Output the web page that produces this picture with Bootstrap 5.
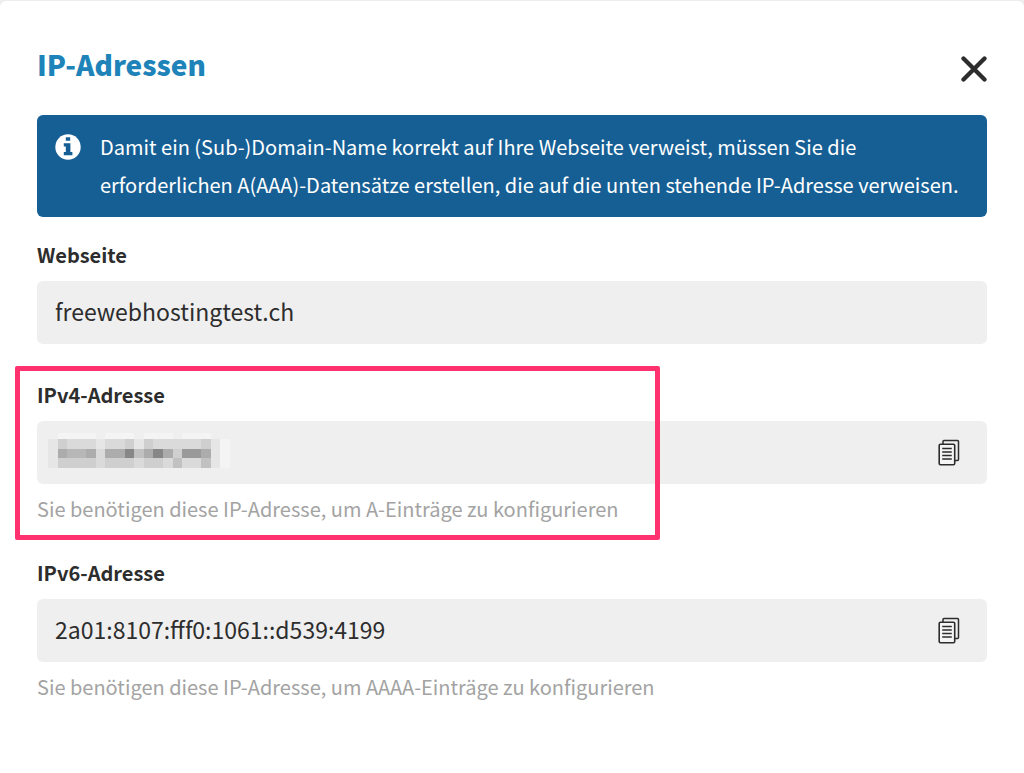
<!DOCTYPE html>
<html lang="de">
<head>
<meta charset="utf-8">
<meta name="viewport" content="width=device-width, initial-scale=1">
<title>IP-Adressen</title>
<link href="https://cdn.jsdelivr.net/npm/bootstrap@5.3.0/dist/css/bootstrap.min.css" rel="stylesheet">
<style>
  body {
    background: #ededed;
    color: #2d2d2d;
    font-family: "Noto Sans CJK SC", "Noto Sans", sans-serif;
    font-size: 20px;
    padding-top: 1px;
  }
  .dialog-panel {
    min-height: calc(100vh - 1px);
    padding: 42px 37px 36px;
    border-radius: 6px 6px 0 0;
  }
  .dialog-title { color: #1d83b9; font-size: 28px; font-weight: 900; line-height: 42px; }
  .close-btn { color: #2d2d2d; line-height: 0; margin-top: 13px; }
  .info-box {
    background: #165f95;
    border-radius: 6px;
    margin-top: 30px;
    padding: 13px 18px;
    gap: 19px;
    line-height: 38px;
  }
  .info-box svg { margin-top: 6px; }
  .field-label { line-height: 28px; margin-bottom: 12px; }
  .field-box { background: #efefef; border-radius: 6px; }
  .field-box .form-control {
    color: #2d2d2d;
    font-size: 23px;
    line-height: 32px;
    height: 63px;
    padding: 14px 18px 17px;
  }
  .copy-btn { color: #2d2d2d; line-height: 0; padding: 0 27px; }
  .hint-text { color: #a3a3a3; line-height: 26px; margin-top: 12px; }
  .masked-value { left: 11px; top: 12px; }
  .marker-frame {
    border: 5px solid #ff326f;
    border-radius: 2px;
    inset: -15px auto -18px -22px;
    width: 645px;
    pointer-events: none;
  }
  .fields { margin-top: 24px; gap: 37px; }
</style>
</head>
<body>
<svg class="d-none" aria-hidden="true">
  <symbol id="copy" viewBox="0 0 22 27">
    <path d="M5 5V2.500Q5 1.500 6 1.500H19.500Q20.500 1.500 20.500 2.500V20.500Q20.500 21.500 19.500 21.500H17" fill="none" stroke="currentColor" stroke-width="1.500"/>
    <rect x="1.200" y="5.200" width="15.500" height="20.500" rx="1.200" fill="#f5f5f5" stroke="currentColor" stroke-width="1.600"/>
    <path d="M4.200 9.500H13.800M4.200 13H13.800M4.200 16.500H13.800M4.200 20H13.800" stroke="currentColor" stroke-width="1.400"/>
  </symbol>
</svg>
<main class="dialog-panel bg-white" role="dialog" aria-labelledby="title">
  <header class="d-flex justify-content-between align-items-start">
    <h1 id="title" class="dialog-title mb-0">IP-Adressen</h1>
    <button type="button" class="close-btn btn border-0 p-0" aria-label="Schliessen">
      <svg width="26" height="26" viewBox="0 0 26 26"><path d="M2.500 2.500L23.500 23.500M23.500 2.500L2.500 23.500" stroke="currentColor" stroke-width="4.300" stroke-linecap="round"/></svg>
    </button>
  </header>

  <div class="info-box d-flex text-white" role="note">
    <svg class="flex-shrink-0" width="26" height="26" viewBox="0 0 26 26" aria-hidden="true">
      <circle cx="13" cy="13" r="12.700" fill="currentColor"/>
      <path d="M10.800 3.200H15.200V6.800H10.800ZM8.800 9.200H15.400V18H17.400V21.300H8.800V18H10.800V12.500H8.800Z" fill="#165f95"/>
    </svg>
    <div>Damit ein (Sub-)Domain-Name korrekt auf Ihre Webseite verweist, müssen Sie die erforderlichen A(AAA)-Datensätze erstellen, die auf die unten stehende IP-Adresse verweisen.</div>
  </div>

  <form class="fields d-flex flex-column">
    <div>
      <label class="field-label d-block fw-bold" for="site">Webseite</label>
      <div class="field-box d-flex">
        <input id="site" class="form-control border-0 bg-transparent" value="freewebhostingtest.ch" readonly>
      </div>
    </div>

    <div class="position-relative">
      <label class="field-label d-block fw-bold" for="ipv4">IPv4-Adresse</label>
      <div class="field-box d-flex align-items-center position-relative">
        <input id="ipv4" class="form-control border-0 bg-transparent" aria-describedby="ipv4-hint" readonly>
        <svg class="masked-value position-absolute" width="182" height="35" viewBox="0 0 19 35" preserveAspectRatio="none" shape-rendering="crispEdges" aria-hidden="true">
          <path fill="#f4f4f4" d="M1 0h4v6h-4zM6 0h3v6h-3zM10 0h3v6h-3zM14 0h3v6h-3zM18 6h1v29h-1z"/>
          <path fill="#e6e6e6" d="M0 6h1v29h-1zM5 6h1v10h-1zM9 6h1v10h-1zM17 6h1v29h-1z"/>
          <path fill="#dadada" d="M2 6h3v10h-3zM6 6h2v10h-2zM11 6h3v10h-3zM14 6h2v10h-2zM5 16h1v19h-1zM9 25h1v10h-1zM12 25h1v10h-1zM14 25h2v10h-2z"/>
          <path fill="#cfcfcf" d="M1 6h1v10h-1zM8 6h1v10h-1zM10 6h1v10h-1zM16 6h1v10h-1zM1 25h4v10h-4zM6 25h3v10h-3zM10 25h2v10h-2zM13 16h1v9h-1z"/>
          <path fill="#c1c1c1" d="M9 16h1v9h-1zM13 25h1v10h-1zM16 25h1v10h-1z"/>
          <path fill="#acacac" d="M1 16h4v9h-4zM6 16h2v9h-2zM10 16h1v9h-1zM12 16h1v9h-1zM16 16h1v9h-1z"/>
          <path fill="#b7b7b7" d="M2 16h2v9h-2z"/>
          <path fill="#9a9a9a" d="M14 16h2v9h-2z"/>
          <path fill="#878787" d="M8 16h1v9h-1zM11 16h1v9h-1z"/>
        </svg>
        <button type="button" class="copy-btn btn border-0" aria-label="IPv4-Adresse kopieren"><svg width="22" height="27"><use href="#copy"/></svg></button>
      </div>
      <div id="ipv4-hint" class="hint-text">Sie benötigen diese IP-Adresse, um A-Einträge zu konfigurieren</div>
      <div class="marker-frame position-absolute"></div>
    </div>

    <div>
      <label class="field-label d-block fw-bold" for="ipv6">IPv6-Adresse</label>
      <div class="field-box d-flex align-items-center">
        <input id="ipv6" class="form-control border-0 bg-transparent" value="2a01:8107:fff0:1061::d539:4199" aria-describedby="ipv6-hint" readonly>
        <button type="button" class="copy-btn btn border-0" aria-label="IPv6-Adresse kopieren"><svg width="22" height="27"><use href="#copy"/></svg></button>
      </div>
      <div id="ipv6-hint" class="hint-text">Sie benötigen diese IP-Adresse, um AAAA-Einträge zu konfigurieren</div>
    </div>
  </form>
</main>
<script src="https://cdn.jsdelivr.net/npm/bootstrap@5.3.0/dist/js/bootstrap.bundle.min.js"></script>
</body>
</html>
